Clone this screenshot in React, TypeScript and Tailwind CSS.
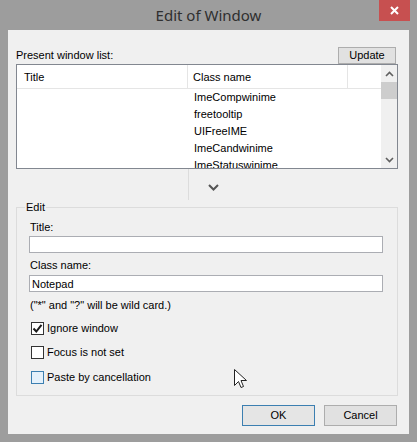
import React from "react";

const rows = [
  "ImeCompwinime",
  "freetooltip",
  "UIFreeIME",
  "ImeCandwinime",
  "ImeStatuswinime",
];

const CheckRow: React.FC<{
  label: string;
  checked?: boolean;
  hover?: boolean;
  className?: string;
}> = ({ label, checked, hover, className }) => (
  <div className={`flex items-center h-[13px] ml-[2px] ${className ?? ""}`}>
    <div
      className={`w-[13px] h-[13px] border flex items-center justify-center ${
        hover ? "border-[#3c7fb1] bg-[#e5f1fb]" : "border-[#333333] bg-white"
      }`}
    >
      {checked && (
        <svg width="11" height="11" viewBox="0 0 11 11">
          <path
            d="M1.5 5.5 L4.3 8.5 L9.5 1.8"
            fill="none"
            stroke="#1a1a1a"
            strokeWidth="2"
          />
        </svg>
      )}
    </div>
    <span className="ml-[3px] leading-[13px]">{label}</span>
  </div>
);

const App: React.FC = () => {
  return (
    <div
      className="w-[417px] h-[442px] bg-[#9d9d9d] flex flex-col text-[11px] text-black"
      style={{ fontFamily: '"Liberation Sans", Arial, sans-serif' }}
    >
      {/* Title bar */}
      <div className="h-[30px] flex items-start">
        <div className="w-[38px]" />
        <div
          className="flex-1 text-center text-[15px] leading-[30px] text-[#2f2f2f]"
          style={{ fontFamily: '"Noto Sans", "Open Sans", sans-serif' }}
        >
          Edit of Window
        </div>
        <div className="w-[31px] h-[21px] mr-[7px] bg-[#c75050] flex items-center justify-center">
          <svg width="9" height="9" viewBox="0 0 9 9">
            <path d="M1 1 L8 8 M8 1 L1 8" stroke="white" strokeWidth="2" />
          </svg>
        </div>
      </div>

      {/* Client area */}
      <div className="relative mx-[8px] h-[404px] bg-[#f0f0f0] pl-[8px] pr-[11px] flex flex-col">
        <div className="flex items-center justify-between pt-[17px] h-[34px]">
          <span className="leading-[13px]">Present window list:</span>
          <button className="w-[58px] h-[17px] mr-[2px] bg-[#e1e1e1] border border-[#adadad] leading-[15px] text-center">
            Update
          </button>
        </div>

        {/* List view */}
        <div className="h-[105px] border border-[#828790] bg-white flex">
          <div className="w-[364px] overflow-hidden">
            <div className="h-[24px] flex border-b border-[#e5e5e5] items-center">
              <div className="w-[171px] h-full border-r border-[#e5e5e5] pl-[7px] leading-[24px]">
                Title
              </div>
              <div className="w-[160px] h-full border-r border-[#e5e5e5] pl-[5px] leading-[24px]">
                Class name
              </div>
            </div>
            {rows.map((r) => (
              <div key={r} className="h-[17px] flex leading-[17px]">
                <div className="w-[172px]" />
                <div className="pl-[5px]">{r}</div>
              </div>
            ))}
          </div>
          <div className="w-[16px] bg-[#f0f0f0] flex flex-col">
            <div className="h-[17px] flex items-center justify-center">
              <svg width="9" height="6" viewBox="0 0 9 6">
                <path d="M1 5 L4.5 1.5 L8 5" fill="none" stroke="#606060" strokeWidth="1.6" />
              </svg>
            </div>
            <div className="h-[17px] bg-[#cdcdcd]" />
            <div className="flex-1" />
            <div className="h-[17px] flex items-center justify-center">
              <svg width="9" height="6" viewBox="0 0 9 6">
                <path d="M1 1 L4.5 4.5 L8 1" fill="none" stroke="#606060" strokeWidth="1.6" />
              </svg>
            </div>
          </div>
        </div>

        {/* Splitter */}
        <div className="h-[32px] flex">
          <div className="w-[172px]" />
          <div className="w-[1px] h-[31px] bg-[#dcdcdc]" />
          <div className="w-[19px]" />
          <div className="pt-[15px]">
            <svg width="11" height="7" viewBox="0 0 11 7">
              <path d="M1 1 L5.5 5.5 L10 1" fill="none" stroke="#555555" strokeWidth="2" />
            </svg>
          </div>
        </div>

        {/* Edit group */}
        <fieldset className="border border-[#dcdcdc] pl-[12px] pr-[14px] pb-[11px] flex flex-col">
          <legend className="ml-[-4px] px-[1px] leading-[13px]">Edit</legend>
          <div className="mt-[7px] ml-[1px] leading-[13px]">Title:</div>
          <input
            className="mt-[2px] h-[17px] w-full border border-[#abadb3] bg-white px-[2px] text-[11px] outline-none"
            defaultValue=""
          />
          <div className="mt-[6px] ml-[1px] leading-[13px]">Class name:</div>
          <input
            className="mt-[3px] h-[17px] w-full border border-[#abadb3] bg-white px-[2px] text-[11px] outline-none"
            defaultValue="Notepad"
          />
          <div className="mt-[7px] ml-[1px] leading-[13px]">
            ("*" and "?" will be wild card.)
          </div>
          <CheckRow label="Ignore window" checked className="mt-[10px]" />
          <CheckRow label="Focus is not set" className="mt-[11px]" />
          <CheckRow label="Paste by cancellation" hover className="mt-[12px]" />
        </fieldset>

        {/* Buttons */}
        <div className="mt-[9px] flex justify-end gap-[9px] mr-[1px]">
          <button className="w-[73px] h-[21px] bg-[#e5e5e5] border border-[#3c7fb1] text-center">
            OK
          </button>
          <button className="w-[73px] h-[21px] bg-[#e1e1e1] border border-[#adadad] text-center">
            Cancel
          </button>
        </div>

        {/* Mouse cursor */}
        <svg
          className="absolute left-[226px] top-[339px]"
          width="13"
          height="21"
          viewBox="0 0 13 21"
        >
          <path
            d="M0.5 0.5 L0.5 16.5 L4.5 12.5 L7 18.5 L9.5 17.5 L7 11.5 L12.5 11.5 Z"
            fill="white"
            stroke="#222222"
            strokeWidth="1"
          />
        </svg>
      </div>
    </div>
  );
};

export default App;
